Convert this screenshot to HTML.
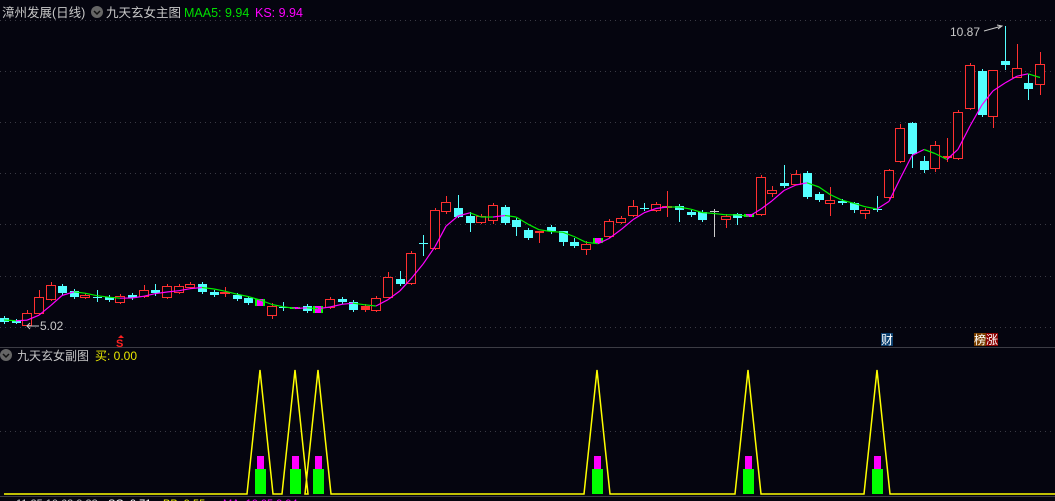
<!DOCTYPE html>
<html><head><meta charset="utf-8"><style>
html,body{margin:0;padding:0;background:#05050f;width:1055px;height:501px;overflow:hidden}
svg{display:block}
text{font-family:"Liberation Sans","Noto Sans CJK SC",sans-serif}
</style></head><body>
<svg id="s" width="1055" height="501" xmlns="http://www.w3.org/2000/svg">
<rect width="1055" height="501" fill="#05050f"/>
<g stroke="#3a3a44" stroke-dasharray="1,4" stroke-width="1">
<line x1="0" y1="20.5" x2="1055" y2="20.5"/>
<line x1="0" y1="71.5" x2="1055" y2="71.5"/>
<line x1="0" y1="122.5" x2="1055" y2="122.5"/>
<line x1="0" y1="173.5" x2="1055" y2="173.5"/>
<line x1="0" y1="224.5" x2="1055" y2="224.5"/>
<line x1="0" y1="276.5" x2="1055" y2="276.5"/>
<line x1="0" y1="327.5" x2="1055" y2="327.5"/>
<line x1="0" y1="431.5" x2="1055" y2="431.5"/>
</g>
<line x1="0" y1="347.5" x2="1055" y2="347.5" stroke="#3c3c44"/>
<line x1="0" y1="496.5" x2="1055" y2="496.5" stroke="#3c3c44"/>
<g id="c"></g>
<g id="sub"></g>
<text x="2" y="17" font-size="12.5" fill="#c8c8c8">漳州发展(日线)</text>
<circle cx="97" cy="12" r="6" fill="#666"/>
<path d="M94 11 L97 14 L100 11" stroke="#111" stroke-width="1.5" fill="none"/>
<text x="106" y="17" font-size="12.5" fill="#c8c8c8">九天玄女主图</text>
<text x="184" y="17" font-size="12.5" fill="#00e000">MAA5: 9.94</text>
<text x="255" y="17" font-size="12.5" fill="#ff00ff">KS: 9.94</text>
<circle cx="6" cy="355" r="6" fill="#666"/>
<path d="M3 354 L6 357 L9 354" stroke="#111" stroke-width="1.5" fill="none"/>
<text x="17" y="360" font-size="12" fill="#c8c8c8">九天玄女副图</text>
<text x="95" y="360" font-size="12" fill="#e8e800">买: 0.00</text>
<text x="950" y="36" font-size="12" fill="#c8c8c8">10.87</text>
<path d="M984 31 L1002 26 M997 25 L1002 26 L998 29" stroke="#c8c8c8" fill="none"/>
<text x="40" y="330" font-size="12" fill="#c8c8c8">5.02</text>
<path d="M27 326 L39 326 M30 323 L27 326 L30 329" stroke="#c8c8c8" fill="none"/>
<path d="M121 335 L118 338 L124 338Z" fill="#ff2020"/>
<text x="116" y="347" font-size="11" font-weight="bold" fill="#ff2020">S</text>
<rect x="881" y="333" width="12" height="13" fill="#0a3f6e"/>
<text x="881" y="344" font-size="12" fill="#fff">财</text>
<rect x="974" y="333" width="12" height="13" fill="#7a4000"/>
<rect x="986" y="333" width="12" height="13" fill="#8a0000"/>
<text x="974" y="344" font-size="12" fill="#fff">榜涨</text>
<g font-size="11">
<text x="16" y="507" fill="#ccc">11.25 10.63 9.38</text>
<text x="108" y="507" fill="#fff">SG: 9.71</text>
<text x="163" y="507" fill="#e8e800">BB: 9.55</text>
<text x="223" y="507" fill="#ff00ff">MA: 10.05 9.94</text>
</g>
</svg>
<script>
var d=[
['c',318,322],['c',321,322],['r',313,325,310],['r',297,313,290],['r',285,299,282],['c',286,293],['c',291,297],['r',295,297],['x',297,297,290,302],['c',297,300],
['r',296,302],['c',295,298],['r',290,296,285],['c',290,293,284,296],['r',286,297],['r',286,292],['r',284,287],['c',284,292],['c',292,295],['r',292,292,287,297],
['c',295,299],['c',298,303],['m',299,306],['r',306,315,303,319],['x',307,307,302,311],['m',307,309],['c',306,311],['m',306,313],['r',299,307],['c',299,302],
['c',302,310],['f',306,310],['r',298,310],['r',277,297,272,298],['c',279,284,271,286],['r',253,283],['x',243,243,235,256],['r',210,248],['r',202,211,196,214],['c',208,217,195,218],
['c',216,223,212,232],['r',216,222],['r',205,220,203,224],['c',207,223],['c',220,227,218,236],['c',230,238],['f',231,232,231,243],['c',227,231,225,234],['c',231,242,231,246],['c',242,246,238,248],
['r',244,249,241,255],['m',238,243],['r',221,236],['r',218,222],['r',206,215,200,217],['x',208,208,203,211],['r',204,210],['r',206,206,191,217],['c',206,210,204,222],['c',212,215],
['c',212,220],['g',211,211,209,237],['r',216,219,214,228],['c',214,218,213,225],['m',214,217],['r',177,214],['r',190,193,186,197],['c',183,186,165,188],['r',174,184,170,185],['c',173,197],
['c',194,200],['r',200,203,187,216],['c',201,203],['c',203,210,202,213],['r',210,213,208,219],['x',209,209,196,212],['r',170,197,169,199],['r',128,161,124,163],['c',123,154,122,168],['c',161,170,156,173],
['r',145,168,141,172],['f',156,157,138,162],['r',112,158],['r',65,108],['c',71,115],['r',70,116,70,128],['c',61,65,26,70],['r',68,77,44,78],['c',83,89,74,100],['r',64,84,52,95]];
var g='',N=document.getElementById('c');var cols={r:'#ff3030',c:'#54ffff',x:'#54ffff',g:'#cccccc',f:'#ff3030'};
var pts=[];
d.forEach(function(e,i){var x=Math.round(4+i*11.64),t=e[0],a=e[1],b=e[2],h=e[3]!=null?e[3]:a-2,l=e[4]!=null?e[4]:b+2;
var col=cols[t]||'#54ffff';
if(t=='m'){g+='<rect x="'+(x-5)+'" y="'+a+'" width="10" height="'+(b-a)+'" fill="#00ff00"/><rect x="'+(x-3)+'" y="'+a+'" width="6" height="'+(b-a)+'" fill="#ff00ff"/>';}
else{g+='<line x1="'+(x+.5)+'" y1="'+h+'" x2="'+(x+.5)+'" y2="'+l+'" stroke="'+col+'"/>';
if(t=='r')g+='<rect x="'+(x-4.5)+'" y="'+(a+.5)+'" width="9" height="'+Math.max(b-a,1)+'" fill="#05050f" stroke="'+col+'"/>';
else if(t=='x'||t=='g')g+='<line x1="'+(x-4)+'" y1="'+(a+.5)+'" x2="'+(x+5)+'" y2="'+(a+.5)+'" stroke="'+col+'"/>';
else g+='<rect x="'+(x-4)+'" y="'+a+'" width="9" height="'+Math.max(b-a,2)+'" fill="'+col+'"/>';}
pts.push([x,(a+b)/2]);});
var ma=[];for(var i=0;i<pts.length;i++){var s=0,n=0;for(var j=Math.max(0,i-2);j<=i;j++){s+=pts[j][1];n++;}ma.push([pts[i][0],s/n]);}
for(var i=1;i<ma.length;i++){var c=ma[i][1]<ma[i-1][1]?'#ff00ff':'#00ee00';g+='<line x1="'+ma[i-1][0]+'" y1="'+ma[i-1][1]+'" x2="'+ma[i][0]+'" y2="'+ma[i][1]+'" stroke="'+c+'" stroke-width="1.2"/>';}
N.innerHTML=g;
var pk=[260,295,318,597,748,877],s2='',p='M4 494';
pk.forEach(function(x){p+=' L'+(x-13)+' 494 L'+x+' 370 L'+(x+13)+' 494';
s2+='<rect x="'+(x-5)+'" y="469" width="11" height="25" fill="#00ff00"/><rect x="'+(x-3)+'" y="456" width="7" height="13" fill="#ff00ff"/>';});
p+=' L1055 494';
s2+='<path d="'+p+'" stroke="#ffff00" stroke-width="1.5" fill="none"/>';
document.getElementById('sub').innerHTML=s2;
</script>
</body></html>
